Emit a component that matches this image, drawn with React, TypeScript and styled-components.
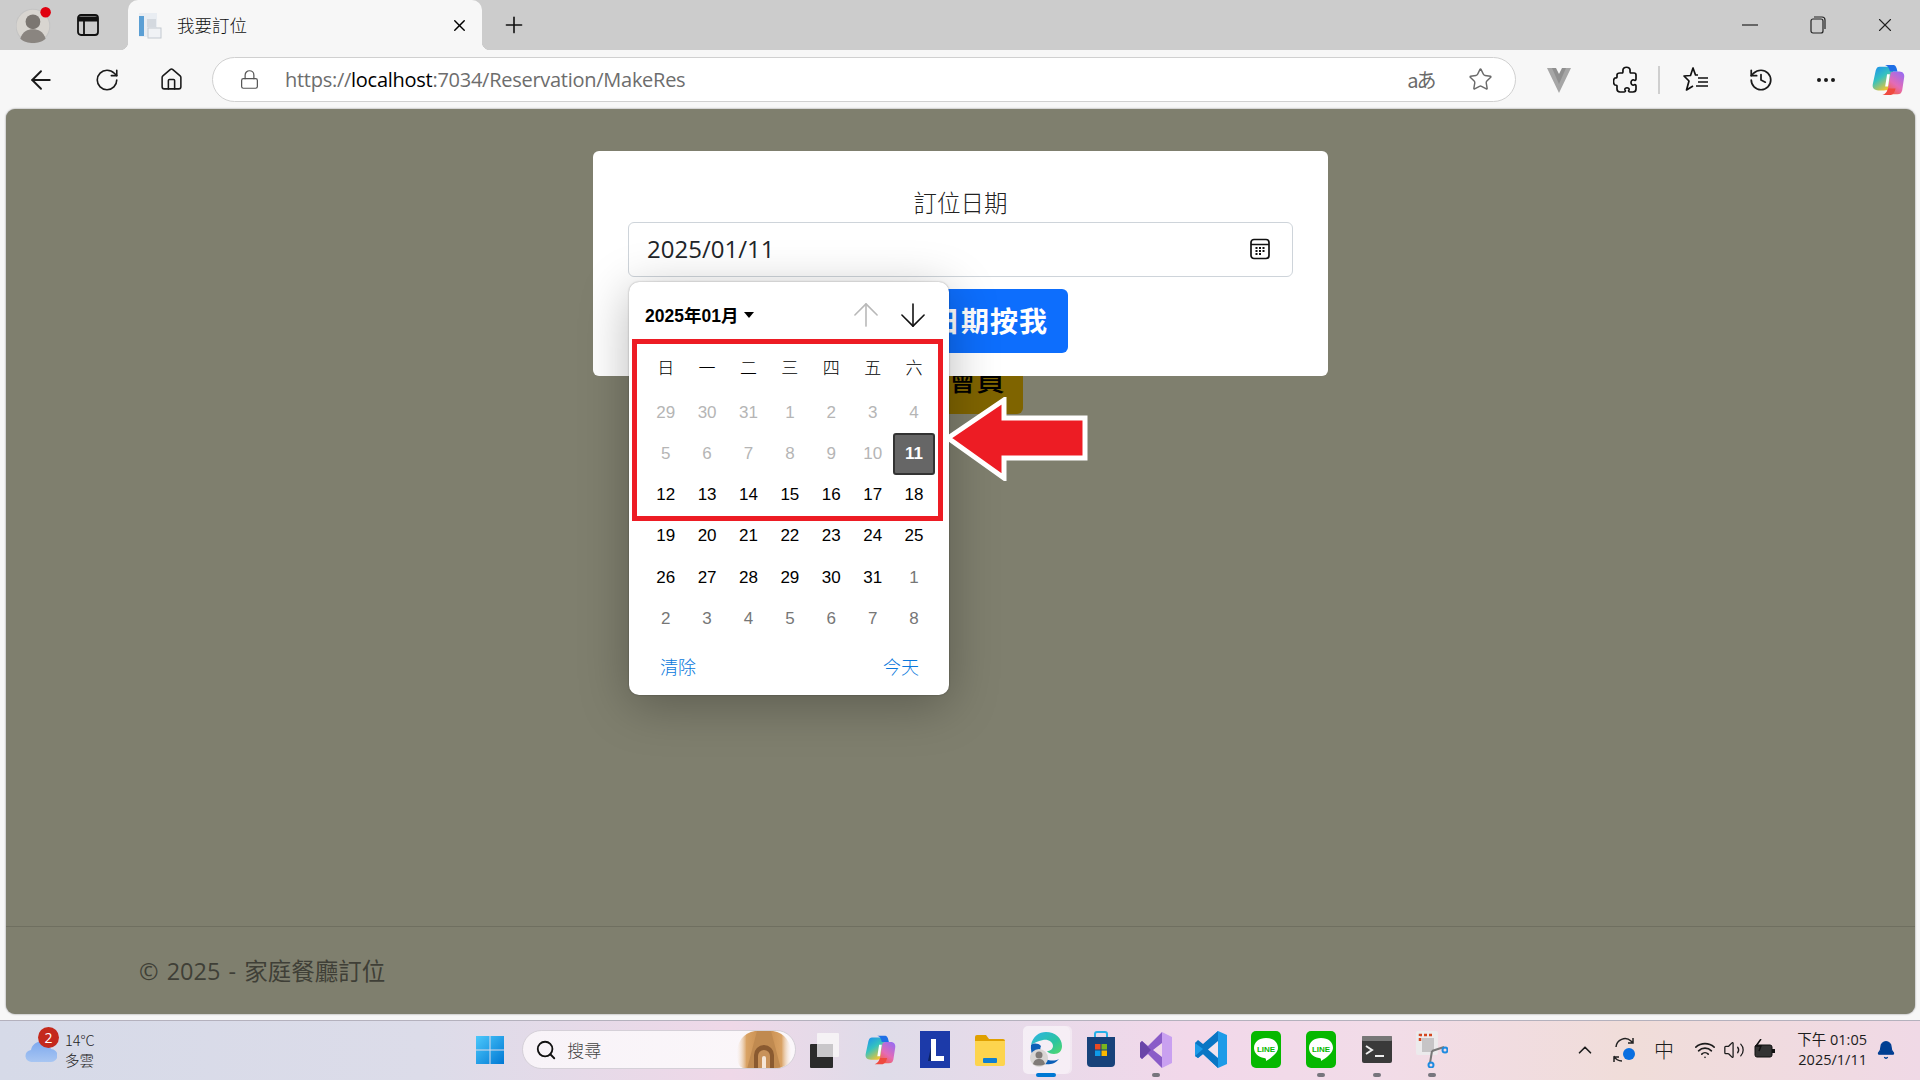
import React from "react";
import styled, { createGlobalStyle } from "styled-components";
import {
  ArrowDown,
  ArrowLeft,
  ArrowUp,
  Bell,
  ChevronUp,
  History,
  Home,
  Lock,
  MoreHorizontal,
  Plus,
  RotateCw,
  Search,
  Star,
  Volume2,
  Wifi,
  X,
} from "lucide-react";

const UI_FONT = `"Open Sans", "Noto Sans CJK TC", sans-serif`;
const CJK_FONT = `"Noto Sans CJK TC", "Open Sans", sans-serif`;
const PICKER_FONT = `"Liberation Sans", "Noto Sans CJK TC", sans-serif`;

const GlobalStyle = createGlobalStyle`
  html, body {
    margin: 0;
    padding: 0;
    background: #f7f7f7;
  }
  * {
    box-sizing: border-box;
  }
`;

const Screen = styled.div`
  width: 1920px;
  height: 1080px;
  display: flex;
  flex-direction: column;
  overflow: hidden;
  font-family: ${UI_FONT};
  background: #f7f7f7;
`;

/* browser chrome */

const TitleBar = styled.div`
  height: 50px;
  display: flex;
  align-items: center;
  background: #cccccc;
`;

const ProfileSlot = styled.div`
  width: 66px;
  display: flex;
  justify-content: center;
  padding-left: 1px;
`;

const ChromeSlot = styled.div<{ $w: number }>`
  width: ${({ $w }) => $w}px;
  flex: none;
  display: flex;
  align-items: center;
  justify-content: center;
  color: #111;
`;

const Tab = styled.div`
  position: relative;
  width: 354px;
  height: 50px;
  display: flex;
  align-items: center;
  padding: 0 13px 0 10px;
  background: #f7f7f7;
  border-radius: 10px 10px 0 0;
  &::before,
  &::after {
    content: "";
    position: absolute;
    bottom: 0;
    width: 8px;
    height: 8px;
  }
  &::before {
    left: -8px;
    background: radial-gradient(circle at 0 0, transparent 8px, #f7f7f7 8.5px);
  }
  &::after {
    right: -8px;
    background: radial-gradient(circle at 100% 0, transparent 8px, #f7f7f7 8.5px);
  }
`;

const TabTitle = styled.span`
  flex: 1;
  margin-left: 15px;
  padding-bottom: 2px;
  font-family: ${CJK_FONT};
  font-size: 17.5px;
  font-weight: 300;
  color: #111;
`;

const WindowControls = styled.div`
  margin-left: auto;
  display: flex;
  padding-right: 1px;
`;

const WindowButton = styled.div`
  width: 67.5px;
  height: 50px;
  display: flex;
  align-items: center;
  justify-content: center;
  color: #222;
`;

const Toolbar = styled.div`
  height: 59px;
  display: flex;
  align-items: center;
  padding: 0 0 0 8px;
  background: #f7f7f7;
`;

const ToolButton = styled.div<{ $w: number }>`
  width: ${({ $w }) => $w}px;
  flex: none;
  display: flex;
  align-items: center;
  justify-content: center;
  color: #1a1a1a;
`;

const AddressBar = styled.div`
  width: 1304px;
  height: 45px;
  margin: 0 11px 0 8px;
  flex: none;
  display: flex;
  align-items: center;
  padding: 0 0 0 26px;
  background: #fff;
  border: 1.5px solid #d0d0d0;
  border-radius: 23px;
  color: #555;
`;

const UrlText = styled.div`
  flex: 1;
  margin-left: 25px;
  font-size: 20px;
  letter-spacing: -0.27px;
  color: #6d6d6d;
  white-space: nowrap;
  b {
    font-weight: 400;
    color: #000;
  }
`;

const TranslateGlyph = styled.span`
  width: 60px;
  text-align: center;
  font-family: ${CJK_FONT};
  font-size: 20px;
  letter-spacing: -2px;
  color: #6a6a6a;
`;

const StarSlot = styled.div`
  width: 64px;
  padding-right: 6px;
  display: flex;
  justify-content: center;
  color: #6a6a6a;
`;

const ToolDivider = styled.div`
  width: 2px;
  height: 28px;
  flex: none;
  background: #cfcfcf;
`;

/* page */

const PageFrame = styled.div`
  flex: 1;
  display: flex;
  padding: 0 5px 6px 6px;
  background: #f7f7f7;
`;

const Surface = styled.div`
  flex: 1;
  display: flex;
  flex-direction: column;
  background: #7f7f6e;
  border-radius: 9px;
  box-shadow: 0 0 2px rgba(0, 0, 0, 0.5);
`;

const Main = styled.main`
  flex: 1;
  display: flex;
  flex-direction: column;
  align-items: center;
  padding-top: 42px;
  position: relative;
`;

const ModalCard = styled.div`
  position: relative;
  z-index: 1;
  width: 735px;
  height: 225px;
  display: flex;
  flex-direction: column;
  align-items: center;
  padding: 35px 35px 0;
  background: #fff;
  border-radius: 6px;
`;

const DateLabel = styled.label`
  height: 36px;
  margin-top: -2px;
  margin-bottom: 2px;
  font-family: ${CJK_FONT};
  font-size: 23.5px;
  font-weight: 300;
  line-height: 36px;
  color: #222;
`;

const DateField = styled.div`
  position: relative;
  width: 665px;
  height: 55px;
  flex: none;
  display: flex;
  align-items: center;
  justify-content: space-between;
  padding: 0 22px 2px 18px;
  border: 1px solid #ced4da;
  border-radius: 6px;
  font-size: 24px;
  color: #212529;
`;

const SubmitButton = styled.div`
  width: 215px;
  height: 64px;
  margin-top: 12px;
  flex: none;
  display: flex;
  align-items: center;
  justify-content: flex-end;
  padding: 0 20px 2px 0;
  background: #0d6efd;
  border-radius: 6px;
  font-family: ${CJK_FONT};
  font-size: 28px;
  font-weight: 700;
  letter-spacing: 1px;
  color: #fff;
`;

const MemberButton = styled.div`
  width: 124px;
  height: 64px;
  margin-top: -26px;
  display: flex;
  align-items: center;
  justify-content: flex-end;
  padding: 0 18px 6px 0;
  background: #7f6400;
  border-radius: 6px;
  font-family: ${CJK_FONT};
  font-size: 28px;
  font-weight: 500;
  color: #000;
`;

const Picker = styled.div`
  position: absolute;
  top: 59px;
  left: 0;
  z-index: 2;
  width: 320px;
  height: 413px;
  display: flex;
  flex-direction: column;
  background: #fff;
  border-radius: 10px;
  box-shadow: 0 10px 50px rgba(0, 0, 0, 0.28), 0 0 2px rgba(0, 0, 0, 0.35);
  font-family: ${PICKER_FONT};
  color: #000;
`;

const PickerHeader = styled.div`
  height: 64px;
  flex: none;
  display: flex;
  align-items: center;
  padding: 0 13px 0 16px;
`;

const MonthButton = styled.div`
  flex: 1;
  display: flex;
  align-items: center;
  gap: 6px;
  font-size: 17.5px;
  font-weight: 700;
  &::after {
    content: "";
    border-left: 5px solid transparent;
    border-right: 5px solid transparent;
    border-top: 6px solid #000;
    margin-top: 2px;
  }
`;

const StepButton = styled.div<{ $off?: boolean }>`
  width: 47px;
  padding-top: 2px;
  display: flex;
  justify-content: center;
  color: ${({ $off }) => ($off ? "#b8b8b8" : "#111")};
`;

const DayGrid = styled.div`
  flex: none;
  display: grid;
  grid-template-columns: repeat(7, 41.4px);
  grid-template-rows: 46px repeat(6, 41.25px);
  padding: 0 14px 0 16px;
`;

const WeekCell = styled.div`
  display: flex;
  align-items: center;
  justify-content: center;
  padding-bottom: 5px;
  font-family: ${CJK_FONT};
  font-size: 17px;
  font-weight: 300;
`;

type DayKind = "off" | "on" | "next" | "selected";

const DAY_COLOR: Record<DayKind, string> = {
  off: "#b5b5b5",
  on: "#000",
  next: "#767676",
  selected: "#fff",
};

const DayCell = styled.div<{ $kind: DayKind }>`
  display: flex;
  align-items: center;
  justify-content: center;
  font-size: 17px;
  color: ${({ $kind }) => DAY_COLOR[$kind]};
  ${({ $kind }) =>
    $kind === "selected" &&
    `
    background: #666;
    border: 2px solid #333;
    border-radius: 3px;
    font-weight: 700;
  `}
`;

const PickerFooter = styled.div`
  flex: 1;
  display: flex;
  align-items: center;
  justify-content: space-between;
  padding: 0 30px 2px 31px;
  font-family: ${CJK_FONT};
  font-size: 18px;
  font-weight: 300;
  color: #0a78dc;
`;

/* annotations drawn over the screenshot */
const RedFrame = styled.div`
  position: absolute;
  left: 626px;
  top: 230px;
  width: 311px;
  height: 182px;
  z-index: 3;
  border: 5px solid #ed1c24;
`;

const CalloutArrow = styled.svg`
  position: absolute;
  left: 936px;
  top: 288px;
  z-index: 3;
`;

const Footer = styled.footer`
  height: 88px;
  display: flex;
  align-items: center;
  padding: 0 0 2px 133px;
  border-top: 1px solid #6f6f60;
  font-size: 23.5px;
  color: #3f3f37;
`;

const FooterText = styled.span`
  font-family: ${UI_FONT};
  font-weight: 400;
  word-spacing: 2px;
`;

/* taskbar */

const Taskbar = styled.div`
  height: 60px;
  display: flex;
  align-items: center;
  padding-bottom: 2px;
  background: linear-gradient(
    90deg,
    #d6dae8 0%,
    #dcdce9 22%,
    #efd8e8 38%,
    #dfdce9 46%,
    #f2d8ea 62%,
    #f2dce8 72%,
    #f0ddd9 85%,
    #f0d9e6 100%
  );
  border-top: 1px solid #b4b1bd;
  color: #1c1c1c;
`;

const Weather = styled.div`
  position: relative;
  width: 462px;
  flex: none;
  display: flex;
  align-items: center;
  padding-left: 25px;
`;

const WeatherBadge = styled.span`
  position: absolute;
  left: 38px;
  top: -3px;
  width: 21px;
  height: 21px;
  display: flex;
  align-items: center;
  justify-content: center;
  background: #c4291c;
  border-radius: 50%;
  font-size: 14px;
  color: #fff;
`;

const WeatherText = styled.div`
  margin-left: 8px;
  font-family: ${CJK_FONT};
  font-size: 14.5px;
  font-weight: 300;
  line-height: 20px;
  color: #222;
`;

const TaskSlot = styled.div<{ $dot?: "run" | "active"; $active?: boolean }>`
  position: relative;
  width: 55.2px;
  height: 57px;
  flex: none;
  display: flex;
  align-items: center;
  justify-content: center;
  ${({ $active }) => $active && `
    &::before {
      content: "";
      position: absolute;
      left: 5px;
      right: 3px;
      top: 5px;
      bottom: 4px;
      background: rgba(255, 255, 255, 0.55);
      border-radius: 5px;
      box-shadow: 2px 0 0 rgba(255, 255, 255, 0.4);
    }
  `}
  > svg {
    position: relative;
  }
  &::after {
    content: ${({ $dot }) => ($dot ? '""' : "none")};
    position: absolute;
    bottom: 1px;
    left: 50%;
    transform: translateX(-50%);
    width: ${({ $dot }) => ($dot === "active" ? 20 : 8)}px;
    height: 4px;
    border-radius: 2px;
    background: ${({ $dot }) => ($dot === "active" ? "#0078d4" : "#77757d")};
  }
`;

const SearchBox = styled.div`
  width: 274px;
  height: 39px;
  margin: 0 1px 0 5px;
  flex: none;
  display: flex;
  align-items: center;
  padding-left: 12px;
  background: linear-gradient(90deg, #f8f3f8, #fbf7fa);
  border: 1px solid #d5d0d8;
  border-radius: 20px;
  overflow: hidden;
`;

const SearchText = styled.span`
  flex: 1;
  margin-left: 10px;
  font-family: ${CJK_FONT};
  font-size: 17px;
  font-weight: 300;
  color: #444;
`;

const Tray = styled.div`
  margin-left: auto;
  display: flex;
  align-items: center;
  padding-right: 15px;
`;

const TraySlot = styled.div<{ $w: number }>`
  width: ${({ $w }) => $w}px;
  flex: none;
  display: flex;
  align-items: center;
  justify-content: center;
  font-family: ${CJK_FONT};
  font-size: 20px;
  font-weight: 300;
`;

const Clock = styled.div`
  width: 86px;
  flex: none;
  font-size: 14.5px;
  line-height: 20px;
  text-align: right;
  color: #1c1c1c;
  white-space: nowrap;
  font-family: ${UI_FONT};
`;

const BellSlot = styled.div`
  width: 38px;
  display: flex;
  justify-content: center;
  color: #003e92;
`;

/* drawings */

const Avatar = () => (
  <svg width="36" height="38" viewBox="0 0 34 36">
    <circle cx="16" cy="19" r="16" fill="#d8d5d0" stroke="#c4c4c4" />
    <circle cx="16" cy="15" r="7" fill="#7b7671" />
    <path d="M4 31c2-7 7-9 12-9s10 2 12 9c-3 3-8 4-12 4s-9-1-12-4z" fill="#8a8580" />
    <circle cx="28" cy="6" r="5" fill="#e0000f" />
  </svg>
);

const VerticalTabs = () => (
  <svg width="22" height="22" viewBox="0 0 22 22" fill="none" stroke="#111" strokeWidth="1.8">
    <rect x="1" y="1" width="20" height="20" rx="3" />
    <path d="M1 5h20" strokeWidth="5" />
    <path d="M7 5v16" />
  </svg>
);

const PageFavicon = () => (
  <svg width="24" height="28" viewBox="0 0 24 28">
    <rect x="1" y="2" width="18" height="24" fill="#e9edf2" />
    <rect x="1" y="5" width="5" height="20" fill="#5b9fd4" />
    <rect x="9" y="8" width="9" height="8" fill="#d4d9df" />
    <rect x="10" y="17" width="13" height="10" fill="#f0f2f5" stroke="#c3c9d0" />
  </svg>
);

const RestoreIcon = () => (
  <svg width="16" height="18" viewBox="0 0 16 18" fill="none" stroke="#222" strokeWidth="1.2">
    <rect x="1" y="3" width="12" height="14" rx="2" />
    <path d="M4 1h8a3 3 0 0 1 3 3v9" />
  </svg>
);

const VMark = () => (
  <svg width="24" height="26" viewBox="0 0 24 26">
    <path d="M0 1h8l4 8 4-8h8L12 26z" fill="#a6a6a6" />
    <path d="M5 1h4l3 6 3-6h4L12 17z" fill="#8f8f8f" />
  </svg>
);

const PuzzleIcon = () => (
  <svg width="24" height="28" viewBox="0 0 24 28" fill="none" stroke="#111" strokeWidth="1.7" strokeLinejoin="round">
    <path d="M10 5c-1-5 8-5 7 0 0 1 0 2 1 2h3c1 0 2 1 2 2v4c0 1-1 2-2 1-4-1-4 6 0 5 1-1 2 0 2 1v3c0 2-1 3-3 3h-3c-1 0-2-1-1-2 1-3-5-3-4 0 1 1 0 2-1 2H7c-2 0-3-1-3-3v-3c0-1-1-1-2-1-2-1-2-6 0-7 1 0 2 0 2-1V9c0-1 1-2 3-2h2c1 0 1-1 1-2z" />
  </svg>
);

const FavList = () => (
  <svg width="26" height="27" viewBox="0 0 26 27" fill="none" stroke="#111" strokeWidth="1.7" strokeLinejoin="round">
    <path d="M15 9h-2.500L10 2 7.500 9.500 1 10l5 5-2.500 9L10 20" />
    <path d="M15 12h10M15 16h10M13 20h12" />
  </svg>
);

const CalendarGlyph = () => (
  <svg width="20" height="22" viewBox="0 0 20 22" fill="none">
    <rect x="1" y="1.500" width="18" height="19" rx="3" stroke="#111" strokeWidth="1.700" />
    <path d="M1 6.500h18" stroke="#111" strokeWidth="1.500" />
    <path d="M5.500 10h2M9 10h2M12.500 10h2M5.500 13h2M9 13h2M12.500 13h2M5.500 16h2M9 16h2" stroke="#111" strokeWidth="2" />
  </svg>
);

const Copilot = ({ id, size }: { id: string; size: number }) => (
  <svg width={size} height={size} viewBox="0 0 36 36">
    <defs>
      <linearGradient id={`${id}-a`} x1="0" y1="0" x2="0.6" y2="1">
        <stop offset="0" stopColor="#1b8cf0" />
        <stop offset="0.5" stopColor="#35c2c0" />
        <stop offset="1" stopColor="#f6c52e" />
      </linearGradient>
      <linearGradient id={`${id}-b`} x1="0.8" y1="0" x2="0.2" y2="1">
        <stop offset="0" stopColor="#9a6cf0" />
        <stop offset="0.55" stopColor="#e46bb6" />
        <stop offset="1" stopColor="#f5603a" />
      </linearGradient>
    </defs>
    <path d="M9 4h12c2 0 3 1 3 3l-5 19c-1 3-3 3-5 3H8c-5 0-7-3-6-7L5 8c1-3 2-4 4-4z" fill={`url(#${id}-a)`} />
    <path d="M16 33h12c3 0 4-1 5-4l2-13c1-4-1-7-5-7h-6l-3 1-3 17c-1 3-1 6-2 6z" fill={`url(#${id}-b)`} />
    <path d="M15 2h8c3 0 4 2 5 7h-8c-1-4-2-6-5-7z" fill="#1f6fe6" />
    <path d="M12 34h9c3-1 4-3 5-7h-8c-1 4-3 6-6 7z" fill="#ef4a3f" />
    <path d="M20 12l-2 13h-3l2-13z" fill="#fff" />
  </svg>
);

const Cloud = () => (
  <svg width="32" height="26" viewBox="0 0 32 26">
    <defs>
      <linearGradient id="cloud" x1="0" y1="0" x2="0" y2="1">
        <stop offset="0" stopColor="#7da8ee" />
        <stop offset="1" stopColor="#a8c6f2" />
      </linearGradient>
    </defs>
    <path d="M7 25a6 6 0 0 1-1-12c1-6 7-10 13-8 4 1 6 4 7 7a6.500 6.500 0 0 1 0 13z" fill="url(#cloud)" />
  </svg>
);

const StartLogo = () => (
  <svg width="30" height="30" viewBox="0 0 30 30">
    <defs>
      <linearGradient id="start" x1="0" y1="0" x2="1" y2="1">
        <stop offset="0" stopColor="#4cc8fb" />
        <stop offset="1" stopColor="#0078d4" />
      </linearGradient>
    </defs>
    <path d="M1 1h13.500v13.500H1zM15.500 1H29v13.500H15.500zM1 15.500h13.500V29H1zM15.500 15.500H29V29H15.500z" fill="url(#start)" />
  </svg>
);

const SearchArt = () => (
  <svg width="62" height="38" viewBox="0 0 62 38">
    <defs>
      <linearGradient id="sand" x1="0" y1="0" x2="1" y2="0">
        <stop offset="0" stopColor="#f5e4d2" stopOpacity="0" />
        <stop offset="0.18" stopColor="#d9a264" />
        <stop offset="0.5" stopColor="#c48a4c" />
        <stop offset="0.82" stopColor="#d9a264" />
        <stop offset="1" stopColor="#f5e4d2" stopOpacity="0" />
      </linearGradient>
    </defs>
    <path d="M6 34C0 20 6 2 22 0h18c16 2 22 20 16 34-1 2-5 4-8 4H14c-3 0-7-2-8-4z" fill="url(#sand)" />
    <path d="M24 0h14l10 38H14z" fill="#c08a50" />
    <path d="M21 38V24a10 10 0 0 1 20 0v14z" fill="#8a5a30" />
    <path d="M25 38V25a6 6 0 0 1 12 0v13z" fill="#c8925a" />
    <path d="M29 38V27a2 2 0 0 1 4 0v11z" fill="#f6e6d6" />
  </svg>
);

const WidgetStack = () => (
  <svg width="32" height="36" viewBox="0 0 32 36">
    <rect x="1" y="12" width="23" height="24" rx="1" fill="#2b2b2b" />
    <rect x="8" y="1" width="22" height="24" rx="1" fill="#f5f2f5" />
    <rect x="8" y="12" width="16" height="13" fill="#c9c7ca" />
  </svg>
);

const LTile = () => (
  <svg width="30" height="37" viewBox="0 0 30 37">
    <rect width="30" height="37" fill="#1c3aa9" />
    <path d="M11 8h5v17h8v5H11z" fill="#fff" />
    <path d="M11 16l-3 14h3z" fill="#0c2260" />
  </svg>
);

const FolderIcon = () => (
  <svg width="30" height="32" viewBox="0 0 30 32">
    <path d="M0 3a2 2 0 0 1 2-2h9l3 4h14a2 2 0 0 1 2 2v4H0z" fill="#e0a000" />
    <path d="M0 7h30v23a2 2 0 0 1-2 2H2a2 2 0 0 1-2-2z" fill="#fdd44e" />
    <rect x="8" y="24" width="14" height="5" rx="1" fill="#0f7fd1" />
  </svg>
);

const EdgeIcon = () => (
  <svg width="32" height="37" viewBox="0 0 32 37">
    <defs>
      <linearGradient id="edge" x1="0" y1="0" x2="1" y2="1">
        <stop offset="0" stopColor="#2fb3e8" />
        <stop offset="0.6" stopColor="#2bc4a0" />
        <stop offset="1" stopColor="#56d96a" />
      </linearGradient>
    </defs>
    <path d="M1 14C3 5 9 1 16 1c9 0 16 6 16 14 0 5-3 8-8 8-3 0-6-1-7-3 3 0 6-2 6-5 0-4-5-7-10-6S2 13 1 14z" fill="url(#edge)" />
    <path d="M1 14c-1 9 4 18 13 19 5 1 11 0 15-5-4 2-9 2-13 0-5-3-7-8-5-13-3-3-7-3-10-1z" fill="#0b5fb8" />
    <circle cx="9" cy="27" r="9" fill="#d9d6d4" />
    <circle cx="9" cy="24" r="3.500" fill="#807b78" />
    <path d="M3 33c1-4 3-5 6-5s5 1 6 5c-3 2-9 2-12 0z" fill="#807b78" />
  </svg>
);

const StoreIcon = () => (
  <svg width="30" height="37" viewBox="0 0 30 37">
    <path d="M9 7V3a2 2 0 0 1 2-2h8a2 2 0 0 1 2 2v4" fill="none" stroke="#26b0e8" strokeWidth="2" />
    <path d="M1 6h28v26a4 4 0 0 1-4 4H5a4 4 0 0 1-4-4z" fill="#17427a" />
    <rect x="9" y="13" width="5.500" height="5.500" fill="#ea4a22" />
    <rect x="15.500" y="13" width="5.500" height="5.500" fill="#7ab51d" />
    <rect x="9" y="19.500" width="5.500" height="5.500" fill="#0f9be8" />
    <rect x="15.500" y="19.500" width="5.500" height="5.500" fill="#fab900" />
  </svg>
);

const VisualStudioIcon = () => (
  <svg width="32" height="38" viewBox="0 0 32 38">
    <path d="M22 1l10 5v26l-10 5z" fill="#c9a0f0" />
    <path d="M22 1L8 15 2 10l-2 2v14l2 2 6-5 14 14V26l-9-7 9-7z" fill="#8a5cc8" />
    <path d="M0 12l2-2 9 9-9 9-2-2z" fill="#6a45a8" />
  </svg>
);

const VSCodeIcon = () => (
  <svg width="32" height="37" viewBox="0 0 32 37">
    <path d="M23 0l9 4v29l-9 4-15-14-5 4-3-2v-13l3-2 5 4z" fill="#1d9be8" />
    <path d="M23 0v37L8 23l-5 4-3-2 8-7-8-6 3-3 5 4z" fill="#0a76c4" />
    <path d="M23 10v17l-10-8.500z" fill="#f2e4ee" />
  </svg>
);

const LineIcon = () => (
  <svg width="30" height="37" viewBox="0 0 30 37">
    <rect width="30" height="37" rx="5" fill="#06b800" />
    <path d="M15 7c7.500 0 12 4 12 10 0 5-7 10-12 13 0-2 0-3-2-3-6-1-10-5-10-10 0-6 5-10 12-10z" fill="#fff" />
    <text x="15" y="21" textAnchor="middle" fontFamily="Liberation Sans, sans-serif" fontWeight="700" fontSize="8" fill="#06b800">
      LINE
    </text>
  </svg>
);

const TerminalIcon = () => (
  <svg width="30" height="27" viewBox="0 0 30 27">
    <rect width="30" height="27" rx="2" fill="#3a3a3a" />
    <rect width="30" height="5" rx="1" fill="#777" />
    <path d="M4 10l6 4-6 4" fill="none" stroke="#eee" strokeWidth="2" />
    <path d="M13 20h9" stroke="#eee" strokeWidth="2" />
  </svg>
);

const SnipIcon = () => (
  <svg width="32" height="37" viewBox="0 0 32 37">
    <rect x="0" y="0" width="22" height="24" rx="2" fill="#eceaec" />
    <path d="M4 10V4h14" fill="none" stroke="#d4461e" strokeWidth="2.500" strokeDasharray="3 2" />
    <rect x="6" y="7" width="12" height="14" fill="#c6c4c6" />
    <path d="M16 20l12-4M16 20l-2 12" stroke="#777" strokeWidth="2" />
    <circle cx="29" cy="19" r="2.500" fill="none" stroke="#1f8be0" strokeWidth="2" />
    <circle cx="15" cy="34" r="2.500" fill="none" stroke="#1f8be0" strokeWidth="2" />
  </svg>
);

const SyncIcon = () => (
  <svg width="24" height="26" viewBox="0 0 24 26" fill="none" stroke="#222" strokeWidth="1.500">
    <path d="M3 10a9 9 0 0 1 15-6l2 2M20 1v5h-5" />
    <path d="M1 19a9 9 0 0 0 8 5M1 25v-5h5" />
    <circle cx="16" cy="17" r="6" fill="#0a6fe0" stroke="none" />
  </svg>
);

const BatteryIcon = () => (
  <svg width="24" height="22" viewBox="0 0 24 22" fill="none">
    <rect x="2" y="6" width="17" height="12" rx="2" fill="#333" stroke="#111" />
    <rect x="19" y="10" width="3" height="4" fill="#111" />
    <path d="M8 0L3 7h5l-2 5" stroke="#111" strokeWidth="1.500" />
  </svg>
);

const DAYS: [number, DayKind][] = [
  [29, "off"], [30, "off"], [31, "off"], [1, "off"], [2, "off"], [3, "off"], [4, "off"],
  [5, "off"], [6, "off"], [7, "off"], [8, "off"], [9, "off"], [10, "off"], [11, "selected"],
  [12, "on"], [13, "on"], [14, "on"], [15, "on"], [16, "on"], [17, "on"], [18, "on"],
  [19, "on"], [20, "on"], [21, "on"], [22, "on"], [23, "on"], [24, "on"], [25, "on"],
  [26, "on"], [27, "on"], [28, "on"], [29, "on"], [30, "on"], [31, "on"], [1, "next"],
  [2, "next"], [3, "next"], [4, "next"], [5, "next"], [6, "next"], [7, "next"], [8, "next"],
];

const WEEK = ["日", "一", "二", "三", "四", "五", "六"];

const App: React.FC = () => {
  return (
    <Screen>
      <GlobalStyle />
      <TitleBar>
        <ProfileSlot>
          <Avatar />
        </ProfileSlot>
        <ChromeSlot $w={44}>
          <VerticalTabs />
        </ChromeSlot>
        <ChromeSlot $w={18} />
        <Tab>
          <PageFavicon />
          <TabTitle>我要訂位</TabTitle>
          <X size={19} strokeWidth={1.8} />
        </Tab>
        <ChromeSlot $w={64}>
          <Plus size={26} strokeWidth={1.5} />
        </ChromeSlot>
        <WindowControls>
          <WindowButton>
            <svg width="16" height="2">
              <path d="M0 1h16" stroke="#222" strokeWidth="1.2" />
            </svg>
          </WindowButton>
          <WindowButton>
            <RestoreIcon />
          </WindowButton>
          <WindowButton>
            <X size={22} strokeWidth={1.2} />
          </WindowButton>
        </WindowControls>
      </TitleBar>

      <Toolbar>
        <ToolButton $w={66}>
          <ArrowLeft size={30} strokeWidth={1.5} />
        </ToolButton>
        <ToolButton $w={65}>
          <RotateCw size={26} strokeWidth={1.5} />
        </ToolButton>
        <ToolButton $w={65}>
          <Home size={25} strokeWidth={1.5} />
        </ToolButton>
        <AddressBar>
          <Lock size={21} strokeWidth={1.4} />
          <UrlText>
            https://<b>localhost</b>:7034/Reservation/MakeRes
          </UrlText>
          <TranslateGlyph>aあ</TranslateGlyph>
          <StarSlot>
            <Star size={25} strokeWidth={1.4} />
          </StarSlot>
        </AddressBar>
        <ToolButton $w={64}>
          <VMark />
        </ToolButton>
        <ToolButton $w={67}>
          <PuzzleIcon />
        </ToolButton>
        <ToolDivider />
        <ToolButton $w={71}>
          <FavList />
        </ToolButton>
        <ToolButton $w={60}>
          <History size={26} strokeWidth={1.6} />
        </ToolButton>
        <ToolButton $w={70}>
          <MoreHorizontal size={24} strokeWidth={2} />
        </ToolButton>
        <ToolButton $w={53}>
          <Copilot id="bar-copilot" size={34} />
        </ToolButton>
      </Toolbar>

      <PageFrame>
        <Surface>
          <Main>
            <ModalCard>
              <DateLabel>訂位日期</DateLabel>
              <DateField>
                <span>2025/01/11</span>
                <CalendarGlyph />
                <Picker>
                  <PickerHeader>
                    <MonthButton>2025年01月</MonthButton>
                    <StepButton $off>
                      <ArrowUp size={38} strokeWidth={1} />
                    </StepButton>
                    <StepButton>
                      <ArrowDown size={38} strokeWidth={1} />
                    </StepButton>
                  </PickerHeader>
                  <DayGrid>
                    {WEEK.map((w) => (
                      <WeekCell key={w}>{w}</WeekCell>
                    ))}
                    {DAYS.map(([d, kind], i) => (
                      <DayCell key={i} $kind={kind}>
                        {d}
                      </DayCell>
                    ))}
                  </DayGrid>
                  <PickerFooter>
                    <span>清除</span>
                    <span>今天</span>
                  </PickerFooter>
                </Picker>
              </DateField>
              <SubmitButton>日期按我</SubmitButton>
            </ModalCard>
            <MemberButton>會員</MemberButton>
            <RedFrame />
            <CalloutArrow width="150" height="84" viewBox="0 0 150 84">
              <path
                d="M6 41L62 3v18h81v40H62v20z"
                fill="#ed1c24"
                stroke="#fff"
                strokeWidth="5"
              />
            </CalloutArrow>
          </Main>
          <Footer>
            <FooterText>© 2025 - 家庭餐廳訂位</FooterText>
          </Footer>
        </Surface>
      </PageFrame>

      <Taskbar>
        <Weather>
          <Cloud />
          <WeatherBadge>2</WeatherBadge>
          <WeatherText>
            14°C
            <br />
            多雲
          </WeatherText>
        </Weather>
        <TaskSlot>
          <StartLogo />
        </TaskSlot>
        <SearchBox>
          <Search size={22} strokeWidth={2} color="#111" />
          <SearchText>搜尋</SearchText>
          <SearchArt />
        </SearchBox>
        <TaskSlot>
          <WidgetStack />
        </TaskSlot>
        <TaskSlot>
          <Copilot id="task-copilot" size={32} />
        </TaskSlot>
        <TaskSlot>
          <LTile />
        </TaskSlot>
        <TaskSlot>
          <FolderIcon />
        </TaskSlot>
        <TaskSlot $active $dot="active">
          <EdgeIcon />
        </TaskSlot>
        <TaskSlot>
          <StoreIcon />
        </TaskSlot>
        <TaskSlot $dot="run">
          <VisualStudioIcon />
        </TaskSlot>
        <TaskSlot>
          <VSCodeIcon />
        </TaskSlot>
        <TaskSlot>
          <LineIcon />
        </TaskSlot>
        <TaskSlot $dot="run">
          <LineIcon />
        </TaskSlot>
        <TaskSlot $dot="run">
          <TerminalIcon />
        </TaskSlot>
        <TaskSlot $dot="run">
          <SnipIcon />
        </TaskSlot>
        <Tray>
          <TraySlot $w={56}>
            <ChevronUp size={22} strokeWidth={1.8} />
          </TraySlot>
          <TraySlot $w={24}>
            <SyncIcon />
          </TraySlot>
          <TraySlot $w={54}>中</TraySlot>
          <TraySlot $w={28}>
            <Wifi size={22} strokeWidth={1.8} />
          </TraySlot>
          <TraySlot $w={30}>
            <Volume2 size={22} strokeWidth={1.4} />
          </TraySlot>
          <TraySlot $w={32}>
            <BatteryIcon />
          </TraySlot>
          <Clock>
            下午 01:05
            <br />
            2025/1/11
          </Clock>
          <BellSlot>
            <Bell size={20} fill="#003e92" strokeWidth={1.6} />
          </BellSlot>
        </Tray>
      </Taskbar>
    </Screen>
  );
};

export default App;
